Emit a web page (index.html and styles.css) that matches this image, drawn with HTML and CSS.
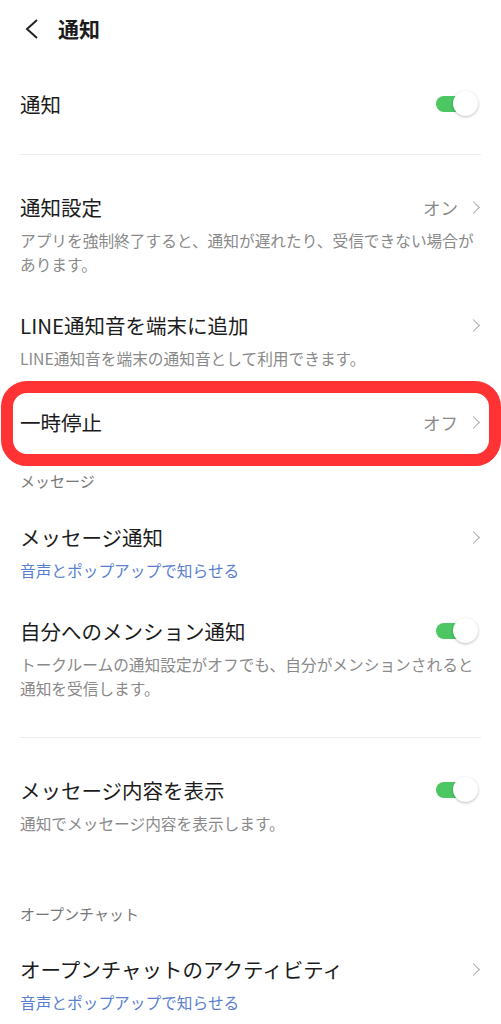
FILE: index.html
```html
<!DOCTYPE html>
<html lang="ja">
<head>
    <meta charset="UTF-8">
    <meta name="viewport" content="width=device-width, initial-scale=1.0">
    <title>通知</title>
    <link rel="stylesheet" href="styles.css">
</head>
<body>
    <div class="header">
        <svg class="back" width="16" height="24" viewBox="0 0 16 24">
            <polyline points="13,3 3,12 13,21" fill="none" stroke="#222" stroke-width="2"/>
        </svg>
        <h1 class="page-title">通知</h1>
    </div>

    <div class="list">
        <div class="row">
            <div class="row-main">
                <span class="title">通知</span>
                <span class="toggle"></span>
            </div>
        </div>

        <div class="divider"></div>

        <div class="row">
            <div class="row-main">
                <span class="title">通知設定</span>
                <span class="value">オン<span class="chev"></span></span>
            </div>
            <p class="desc">アプリを強制終了すると、通知が遅れたり、受信できない場合があります。</p>
        </div>

        <div class="row">
            <div class="row-main">
                <span class="title">LINE通知音を端末に追加</span>
                <span class="value"><span class="chev"></span></span>
            </div>
            <p class="desc">LINE通知音を端末の通知音として利用できます。</p>
        </div>

        <div class="row pause">
            <div class="row-main">
                <span class="title">一時停止</span>
                <span class="value">オフ<span class="chev"></span></span>
            </div>
            <div class="highlight"></div>
        </div>

        <div class="section">メッセージ</div>

        <div class="row">
            <div class="row-main">
                <span class="title">メッセージ通知</span>
                <span class="value"><span class="chev"></span></span>
            </div>
            <p class="desc link">音声とポップアップで知らせる</p>
        </div>

        <div class="row">
            <div class="row-main">
                <span class="title">自分へのメンション通知</span>
                <span class="toggle"></span>
            </div>
            <p class="desc">トークルームの通知設定がオフでも、自分がメンションされると通知を受信します。</p>
        </div>

        <div class="divider"></div>

        <div class="row">
            <div class="row-main">
                <span class="title">メッセージ内容を表示</span>
                <span class="toggle"></span>
            </div>
            <p class="desc">通知でメッセージ内容を表示します。</p>
        </div>

        <div class="section section-open">オープンチャット</div>

        <div class="row">
            <div class="row-main">
                <span class="title">オープンチャットのアクティビティ</span>
                <span class="value"><span class="chev"></span></span>
            </div>
            <p class="desc link">音声とポップアップで知らせる</p>
        </div>
    </div>
</body>
</html>
```

FILE: styles.css
```css
*{
    margin: 0;
    padding: 0;
    box-sizing: border-box;
}
body{
    width: 100%;
    background-color: #ffffff;
    font-family: "Noto Sans CJK JP", "Noto Sans", sans-serif;
    color: #1c1c1c;
    overflow: hidden;
}
.header{
    height: 56px;
    display: flex;
    align-items: center;
    padding-left: 24px;
}
.back{
    display: block;
    margin-top: 1px;
}
.page-title{
    font-size: 21px;
    font-weight: bold;
    line-height: 28px;
    margin-left: 18px;
}
.list{
    padding: 17px 20px 0 20px;
}
.row{
    padding: 17px 0;
    position: relative;
}
.row-main{
    display: flex;
    align-items: center;
    justify-content: space-between;
    height: 28px;
}
.title{
    font-size: 20.5px;
    line-height: 28px;
    white-space: nowrap;
}
.value{
    display: flex;
    align-items: center;
    font-size: 17.5px;
    color: #8a8a8a;
}
.chev{
    display: inline-block;
    width: 9px;
    height: 9px;
    border-top: 1.6px solid #a8a8a8;
    border-right: 1.6px solid #a8a8a8;
    transform: rotate(45deg);
    margin-left: 11px;
    margin-right: 3px;
}
.desc{
    margin-top: 8px;
    font-size: 15.7px;
    line-height: 24px;
    color: #8a8a8a;
}
.link{
    color: #5a7fd0;
}
.toggle{
    position: relative;
    width: 42px;
    height: 26px;
    margin-right: 3px;
}
.toggle::before{
    content: "";
    position: absolute;
    left: 0;
    top: 5px;
    width: 28px;
    height: 16px;
    border-radius: 8px;
    background-color: #4cc764;
}
.toggle::after{
    content: "";
    position: absolute;
    right: 0;
    top: 0;
    width: 25px;
    height: 25px;
    border-radius: 50%;
    background-color: #ffffff;
    box-shadow: 0 1px 3px rgba(0, 0, 0, 0.25);
}
.divider{
    height: 1px;
    background-color: #ececec;
    margin: 19px 0 21px 0;
}
.pause{
    padding: 20px 0;
}
.highlight{
    position: absolute;
    top: -7px;
    bottom: -10px;
    left: -19px;
    right: -20px;
    border: 12px solid #ff3333;
    border-radius: 26px;
}
.section{
    padding: 15px 0;
    font-size: 15px;
    line-height: 20px;
    color: #777777;
}
.section-open{
    padding: 51px 0 14px 0;
}
```
